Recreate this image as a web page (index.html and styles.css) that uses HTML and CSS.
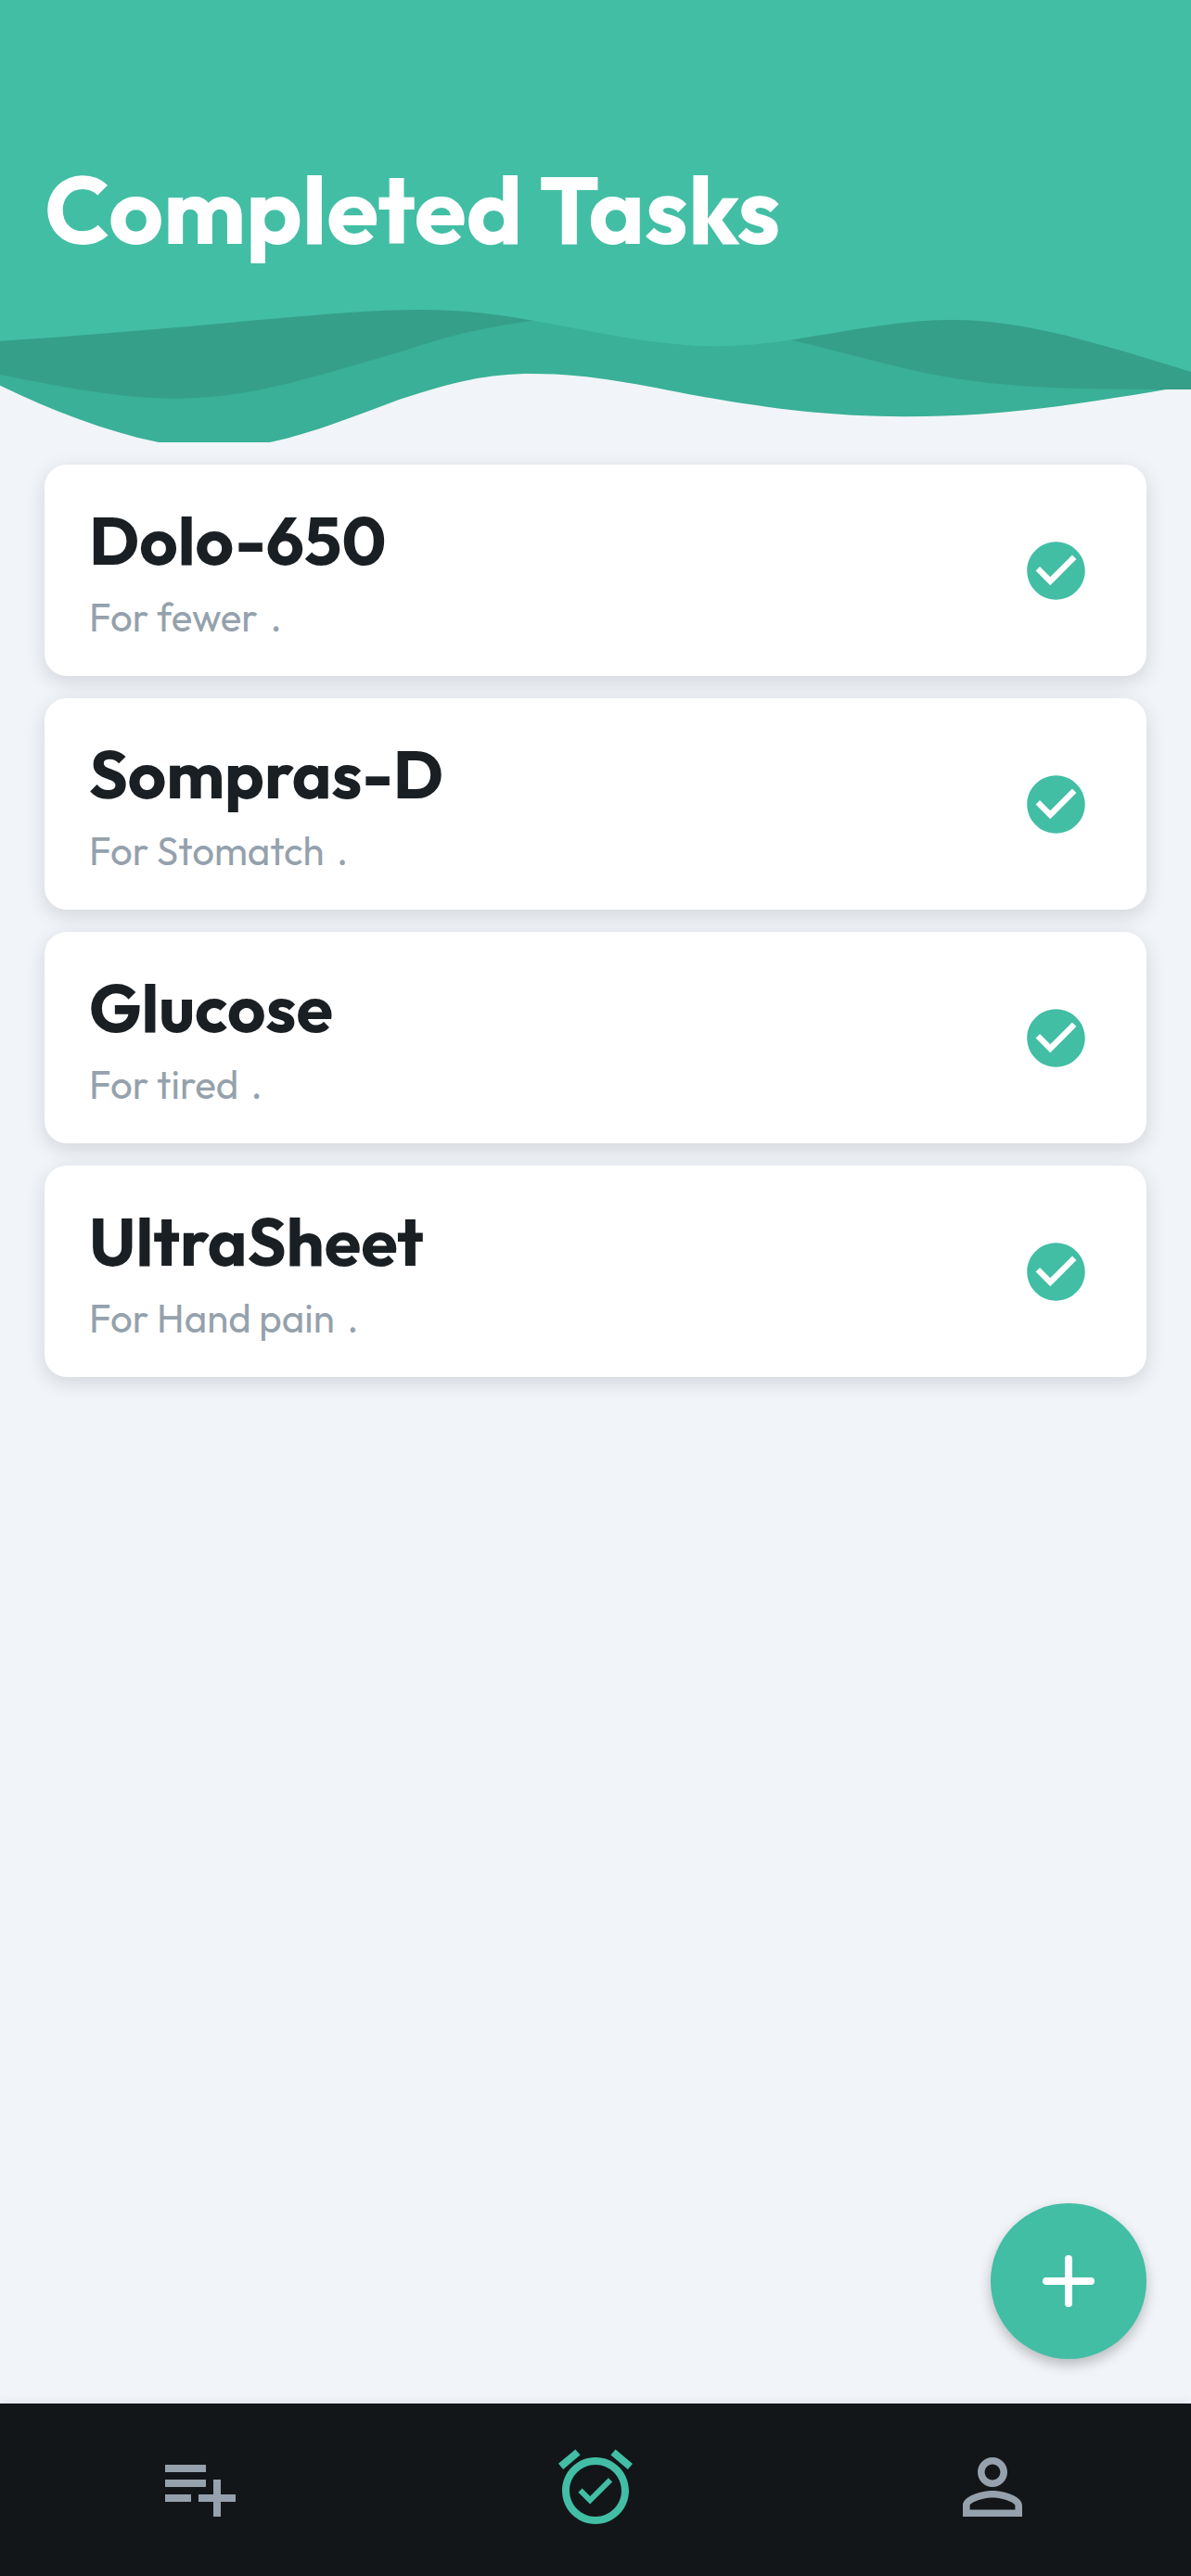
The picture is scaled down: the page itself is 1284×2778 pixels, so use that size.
FILE: index.html
```html
<!DOCTYPE html>
<html lang="en">
<head>
<meta charset="utf-8">
<title>Completed Tasks</title>
<link rel="stylesheet" href="styles.css">
</head>
<body>
<div class="app">
  <header class="header">
    <svg class="waves" viewBox="0 0 1284 477" aria-hidden="true">
      <path class="wave-dark" d="M0 320H1284V420H1190L1000 420L573 360L430 400L190 440L0 412Z"/>
      <path class="wave-mid" d="M0 404C63 416.500 127 429.700 190 429.700C230 429.700 263 424.500 300 416C343 406 387 392 430 380C480 363 520 353 573 346L620 335H790L853 366.500C896 377 940 389 983 399C1040 412 1095 416.500 1150 418.500C1195 420 1239 420 1284 420H1257C1232 424.500 1208 428 1183 432C1115 442.500 1050 449.300 975 449.300C895 449.300 825 440 753 427C693 416 640 403 573 403C520 403 478 415 430 431C384 448 338 467 292 476.700C250 485 210 485 170 476.700C113 465 57 443 0 415.700Z"/>
      <path class="wave-base" d="M0 0H1284V401C1239 387 1195 373.500 1150 362C1109 352 1068 345 1027 345C990 345 953 350.500 917 356C869 363.500 825 373.300 773 373.300C728 373.300 685 366.300 640 358C575 346 525 334 455 334C403 334 352 338.700 300 343.300C200 352 100 361.500 0 367.700Z"/>
    </svg>
    <h1 class="title">Completed Tasks</h1>
  </header>
  <main class="list">
    <article class="card">
      <div class="info"><h2 class="name">Dolo-650</h2><p class="note"><span>For fewer</span><span>.</span></p></div>
      <svg class="check" viewBox="0 0 24 24"><path d="M12 2C6.480 2 2 6.480 2 12s4.480 10 10 10 10-4.480 10-10S17.520 2 12 2zm-2 15l-5-5 1.410-1.410L10 14.170l7.590-7.590L19 8l-9 9z"/></svg>
    </article>
    <article class="card">
      <div class="info"><h2 class="name">Sompras-D</h2><p class="note"><span>For Stomatch</span><span>.</span></p></div>
      <svg class="check" viewBox="0 0 24 24"><path d="M12 2C6.480 2 2 6.480 2 12s4.480 10 10 10 10-4.480 10-10S17.520 2 12 2zm-2 15l-5-5 1.410-1.410L10 14.170l7.590-7.590L19 8l-9 9z"/></svg>
    </article>
    <article class="card">
      <div class="info"><h2 class="name">Glucose</h2><p class="note"><span>For tired</span><span>.</span></p></div>
      <svg class="check" viewBox="0 0 24 24"><path d="M12 2C6.480 2 2 6.480 2 12s4.480 10 10 10 10-4.480 10-10S17.520 2 12 2zm-2 15l-5-5 1.410-1.410L10 14.170l7.590-7.590L19 8l-9 9z"/></svg>
    </article>
    <article class="card">
      <div class="info"><h2 class="name">UltraSheet</h2><p class="note"><span>For Hand pain</span><span>.</span></p></div>
      <svg class="check" viewBox="0 0 24 24"><path d="M12 2C6.480 2 2 6.480 2 12s4.480 10 10 10 10-4.480 10-10S17.520 2 12 2zm-2 15l-5-5 1.410-1.410L10 14.170l7.590-7.590L19 8l-9 9z"/></svg>
    </article>
  </main>
  <button class="fab" aria-label="Add task">
    <svg viewBox="0 0 56 56"><path d="M28 4V52M4 28H52"/></svg>
  </button>
  <nav class="nav">
    <a class="tab"><svg viewBox="0 0 24 24"><path d="M14 10H3v2h11v-2zm0-4H3v2h11V6zm4 8v-4h-2v4h-4v2h4v4h2v-4h4v-2h-4zM3 16h7v-2H3v2z"/></svg></a>
    <a class="tab active"><svg viewBox="0 0 24 24"><path d="M22 5.720l-4.600-3.860-1.290 1.530 4.600 3.860L22 5.720zM7.880 3.390L6.600 1.860 2 5.710l1.290 1.530 4.590-3.850zM12 4c-4.970 0-9 4.030-9 9s4.020 9 9 9c4.970 0 9-4.030 9-9s-4.030-9-9-9zm0 16c-3.870 0-7-3.130-7-7s3.130-7 7-7 7 3.130 7 7-3.130 7-7 7zm-1.460-5.470L8.410 12.400l-1.060 1.060 3.180 3.180 6-6-1.060-1.060-4.930 4.950z"/></svg></a>
    <a class="tab"><svg viewBox="0 0 24 24"><path d="M12 5.900c1.160 0 2.100.94 2.100 2.100s-.94 2.100-2.100 2.100S9.900 9.160 9.900 8s.94-2.100 2.100-2.100m0 9c2.970 0 6.100 1.460 6.100 2.100v1.100H5.900V17c0-.64 3.130-2.100 6.100-2.100M12 4C9.790 4 8 5.790 8 8s1.790 4 4 4 4-1.790 4-4-1.790-4-4-4zm0 9c-2.670 0-8 1.340-8 4v3h16v-3c0-2.660-5.330-4-8-4z"/></svg></a>
  </nav>
</div>
</body>
</html>
```
FILE: styles.css
```css
* { box-sizing: border-box; margin: 0; padding: 0; }
body { background: #f1f4f8; font-family: Outfit, Lato, "Open Sans", sans-serif; }
.app { position: relative; width: 1284px; height: 2778px; display: flex; flex-direction: column; overflow: hidden; }
.header { position: relative; height: 477px; padding: 165px 48px 0; flex: none; }
.waves { position: absolute; inset: 0; width: 1284px; height: 477px; display: block; }
.wave-base { fill: #42bea5; }
.wave-mid { fill: #39b097; }
.wave-dark { fill: #369f89; }
.title { position: relative; color: #fff; font-size: 102px; line-height: 122px; font-weight: 700; white-space: nowrap; }
.list { flex: 1; padding: 24px 48px 0; display: flex; flex-direction: column; gap: 24px; }
.card { height: 228px; flex: none; display: flex; align-items: center; justify-content: space-between; padding: 0 60px 0 48px; background: #fff; border-radius: 24px; box-shadow: 0 6px 21px rgba(14, 21, 27, .137); }
.info { display: flex; flex-direction: column; }
.name { color: #1a1f24; font-size: 72px; line-height: 92px; font-weight: 700; white-space: nowrap; }
.note { display: flex; gap: 13.5px; margin-top: 10px; color: #95a1ac; font-size: 42px; line-height: 54px; white-space: nowrap; }
.check { width: 75px; height: 75px; fill: #42bea5; }
.fab { position: absolute; right: 48px; bottom: 234px; width: 168px; height: 168px; border: 0; border-radius: 50%; background: #42bea5; display: flex; align-items: center; justify-content: center; box-shadow: 0 6px 14px rgba(0, 0, 0, .24); }
.fab svg { width: 56px; height: 56px; stroke: #fff; stroke-width: 8; stroke-linecap: round; }
.nav { height: 186px; flex: none; background: #131619; display: grid; grid-template-columns: repeat(3, 1fr); padding-top: 42px; box-shadow: 0 0 10px rgba(0, 0, 0, .1); }
.tab { display: flex; justify-content: center; color: #95a1ac; }
.tab svg { width: 96px; height: 96px; fill: currentColor; }
.active { color: #42bea5; }
```
